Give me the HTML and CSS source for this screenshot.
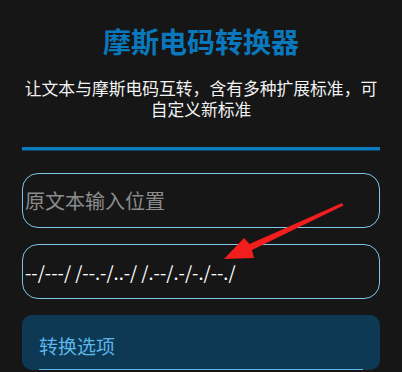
FILE: index.html
```html
<!DOCTYPE html>
<html lang="zh-CN">
<head>
<meta charset="utf-8">
<title>摩斯电码转换器</title>
<link rel="stylesheet" href="styles.css">
</head>
<body>
<div class="page">
  <h1 class="title">摩斯电码转换器</h1>
  <p class="subtitle">让文本与摩斯电码互转，含有多种扩展标准，可自定义新标准</p>
  <div class="divider"></div>
  <div class="field"><span class="placeholder">原文本输入位置</span></div>
  <div class="field"><span class="morse">--/---/ /--.-/..-/ /.--/.-/-./--./</span></div>
  <div class="card">
    <div class="card-title">转换选项</div>
    <div class="card-rule"></div>
  </div>
</div>
<svg class="arrow" width="402" height="372" viewBox="0 0 402 372" xmlns="http://www.w3.org/2000/svg">
  <polygon points="342,203 343.5,205.5 252,250 254,258 224,259 244,238 249.5,244" fill="#f21d1d"/>
</svg>
</body>
</html>
```
FILE: styles.css
```css
html, body {
  margin: 0;
  padding: 0;
  background: #161616;
}
body {
  font-family: "Noto Sans CJK SC", "Noto Sans", sans-serif;
  width: 402px;
  height: 372px;
  overflow: hidden;
  position: relative;
}
.page {
  padding: 0 22px;
  display: flex;
  flex-direction: column;
}
.title {
  margin: 23px 0 0;
  font-size: 28px;
  line-height: 36px;
  font-weight: 700;
  color: #0a78bd;
  text-align: center;
}
.subtitle {
  margin: 19px 0 0;
  font-size: 16.8px;
  line-height: 20.5px;
  color: #f2f2f2;
  text-align: center;
}
.divider {
  margin-top: 28px;
  height: 3px;
  background: #0c7bbd;
  border-bottom: 1px solid #0b4668;
}
.field {
  margin-top: 22px;
  height: 53px;
  border: 1px solid #7ec6e4;
  border-radius: 16px;
  display: flex;
  align-items: center;
  padding: 0 2px;
}
.field + .field {
  margin-top: 16px;
}
.placeholder {
  font-size: 20px;
  color: #8c8c8c;
}
.morse {
  font-size: 18.3px;
  color: #ffffff;
}
.card {
  margin-top: 16px;
  background: #0d3955;
  border-radius: 10px;
  padding: 16px 17px 0;
}
.card-title {
  font-size: 19px;
  line-height: 30px;
  color: #5cb6ea;
}
.card-rule {
  margin-top: 8px;
  height: 1px;
  background: #5cb6ea;
}
.arrow {
  position: absolute;
  left: 0;
  top: 0;
  pointer-events: none;
}
```
